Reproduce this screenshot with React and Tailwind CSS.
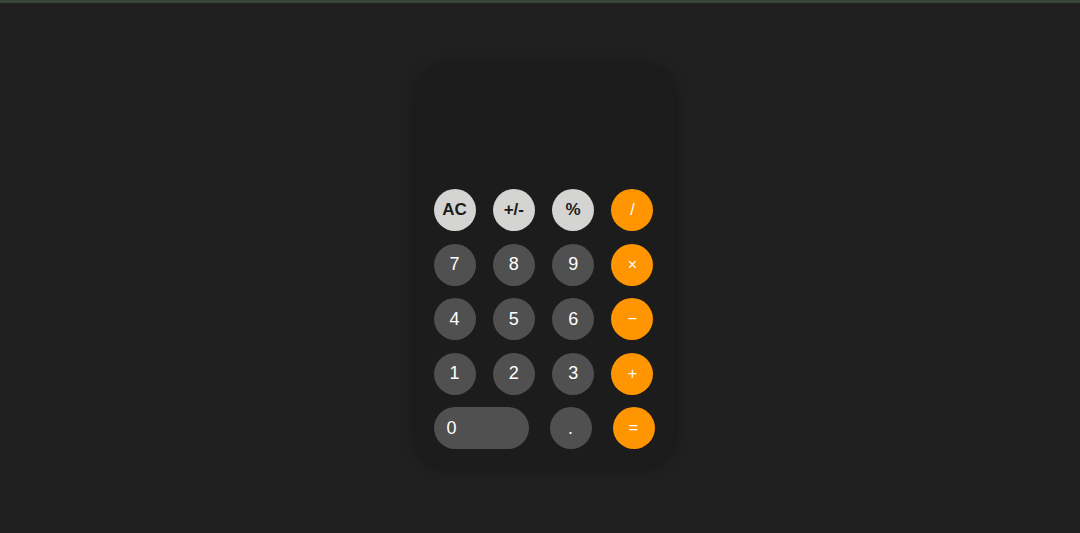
import React from "react";

const rows = [
  [["AC", "light"], ["+/-", "light"], ["%", "light"], ["/", "op"]],
  [["7", "num"], ["8", "num"], ["9", "num"], ["×", "op"]],
  [["4", "num"], ["5", "num"], ["6", "num"], ["−", "op"]],
  [["1", "num"], ["2", "num"], ["3", "num"], ["+", "op"]],
];

function Btn({ label, kind }) {
  const cls =
    kind === "light"
      ? "bg-[#d4d4d2] text-[#1c1c1c] font-bold text-[17px]"
      : kind === "op"
      ? "bg-[#ff9500] text-white text-[16px]"
      : "bg-[#505050] text-white text-[18px]";
  return (
    <div className={`w-[42px] h-[42px] rounded-full flex items-center justify-center ${cls}`}>
      {label}
    </div>
  );
}

export default function App() {
  return (
    <div
      className="w-full h-[533px] bg-[#202020] flex flex-col"
      style={{ fontFamily: '"Liberation Sans", Arial, sans-serif' }}
    >
      <div className="h-[3px] bg-[#36443a] shrink-0" />
      <div className="flex-1 flex items-center justify-center pl-[9px] pb-[3px]">
        <div className="w-[258px] h-[401px] rounded-[30px] bg-[#1c1c1c] shadow-[0_0_16px_rgba(0,0,0,0.35)] px-[18px] pb-[18px] flex flex-col justify-end gap-[12.5px]">
          {rows.map((r, i) => (
            <div key={i} className="w-[220px] flex justify-between">
              {r.map(([l, k]) => (
                <Btn key={l} label={l} kind={k} />
              ))}
            </div>
          ))}
          <div className="w-[221px] flex justify-between">
            <div className="w-[95px] h-[42px] rounded-full bg-[#505050] text-white text-[18px] flex items-center pl-[13px]">
              0
            </div>
            <Btn label="." kind="num" />
            <Btn label="=" kind="op" />
          </div>
        </div>
      </div>
    </div>
  );
}
